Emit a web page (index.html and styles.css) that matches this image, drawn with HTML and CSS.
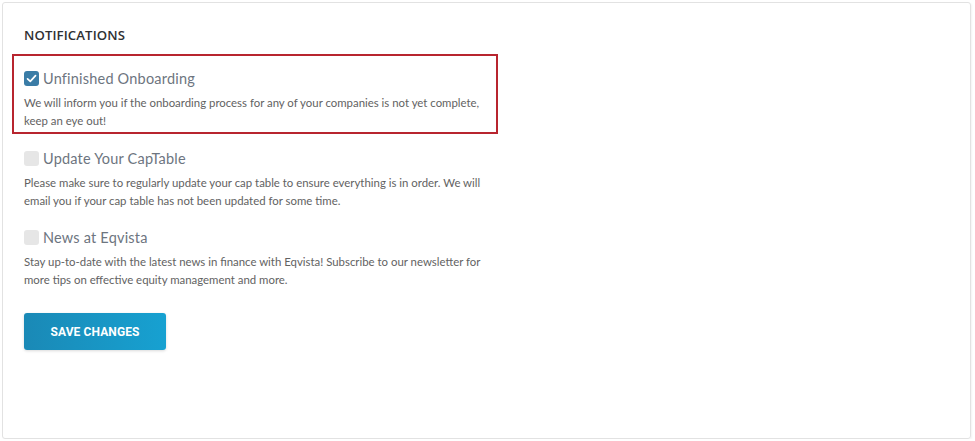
FILE: index.html
```html
<!DOCTYPE html>
<html>
<head>
<meta charset="utf-8">
<link rel="stylesheet" href="styles.css">
</head>
<body>
<div class="card">
  <h2 class="title">NOTIFICATIONS</h2>
  <div class="item item-highlight">
    <label class="row">
      <span class="box box-checked">
        <svg viewBox="0 0 16 16" width="15" height="15"><path d="M3.8 8.3 L6.7 11 L12.3 4.9" fill="none" stroke="#fff" stroke-width="1.8" stroke-linecap="round" stroke-linejoin="round"/></svg>
      </span>
      <span class="label">Unfinished Onboarding</span>
    </label>
    <p class="desc">We will inform you if the onboarding process for any of your companies is not yet complete, keep an eye out!</p>
  </div>
  <div class="item">
    <label class="row">
      <span class="box"></span>
      <span class="label">Update Your CapTable</span>
    </label>
    <p class="desc">Please make sure to regularly update your cap table to ensure everything is in order. We will email you if your cap table has not been updated for some time.</p>
  </div>
  <div class="item">
    <label class="row">
      <span class="box"></span>
      <span class="label">News at Eqvista</span>
    </label>
    <p class="desc">Stay up-to-date with the latest news in finance with Eqvista! Subscribe to our newsletter for more tips on effective equity management and more.</p>
  </div>
  <button class="btn">SAVE CHANGES</button>
</div>
</body>
</html>
```
FILE: styles.css
```css
html, body {
  margin: 0;
  padding: 0;
  background: #ffffff;
}
body {
  font-family: "Lato", "Open Sans", sans-serif;
}
.card {
  box-sizing: border-box;
  margin: 2px 4px 0 2px;
  height: 437px;
  border: 1px solid #e2e2e2;
  border-radius: 3px;
  padding: 24px 21px 0 21px;
  box-shadow: 1px 1px 2px rgba(0,0,0,0.05);
}
.title {
  margin: 0 0 11px 0;
  font-family: "Open Sans", sans-serif;
  font-weight: 600;
  font-size: 13.2px;
  line-height: 16px;
  color: #2f3033;
  letter-spacing: 0.1px;
}
.item {
  width: 462px;
  margin-bottom: 20px;
}
.item-highlight {
  margin-left: -12px;
  width: 462px;
  padding: 14px 10px 3px 10px;
  border: 2px solid #b8252f;
  margin-bottom: 16px;
}
.row {
  display: flex;
  align-items: center;
  gap: 4px;
  height: 16px;
}
.box {
  width: 15px;
  height: 15px;
  border-radius: 3px;
  background: #e6e6e6;
  display: flex;
  align-items: center;
  justify-content: center;
  flex: none;
}
.box-checked {
  background: #3a7ca6;
}
.box svg {
  display: block;
}
.label {
  font-size: 14.5px;
  color: #6d7580;
  letter-spacing: 0.2px;
}
.desc {
  margin: 8px 0 0 0;
  font-size: 11.4px;
  line-height: 17.5px;
  color: #626262;
}
.btn {
  margin-top: 5px;
  width: 142px;
  height: 37px;
  border: none;
  border-radius: 3px;
  background: linear-gradient(90deg, #1a89b6 0%, #17a1d1 100%);
  color: #ffffff;
  font-family: "Roboto", sans-serif;
  font-weight: 700;
  font-size: 12px;
  letter-spacing: 0.1px;
  box-shadow: 0 1px 3px rgba(0,0,0,0.15);
  cursor: pointer;
}
```
